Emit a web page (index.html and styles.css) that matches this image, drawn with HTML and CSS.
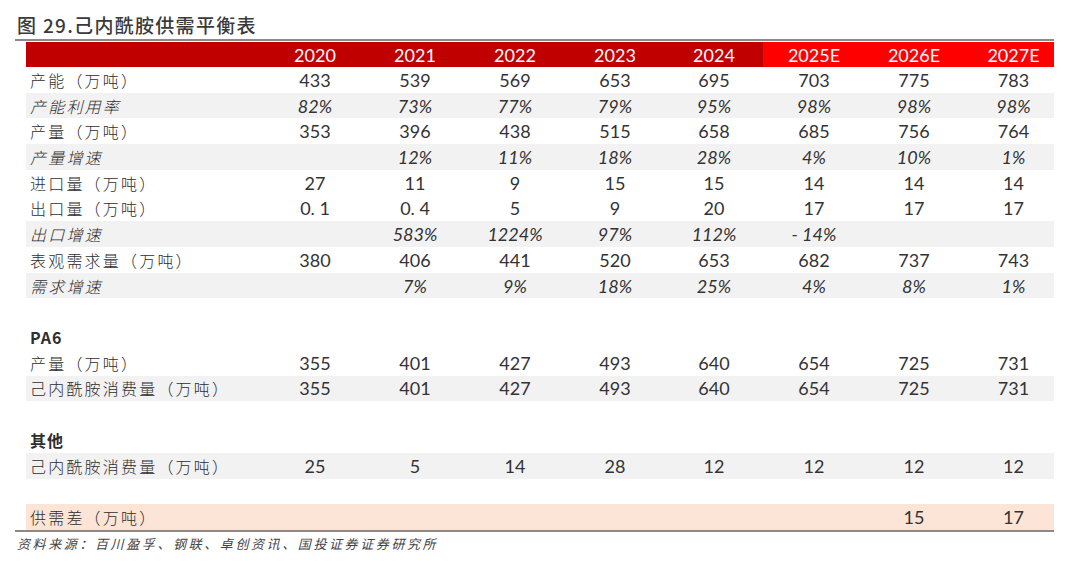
FILE: index.html
```html
<!DOCTYPE html>
<html lang="zh-CN">
<head>
<meta charset="utf-8">
<title>图 29.己内酰胺供需平衡表</title>
<link rel="stylesheet" href="styles.css">
</head>
<body>
<div class="page">
  <div class="title">图 29.己内酰胺供需平衡表</div>
  <div class="rule"></div>
  <div class="table">
    <div class="row head">
      <div class="lab dark"></div>
      <div class="num dark">2020</div>
      <div class="num dark">2021</div>
      <div class="num dark">2022</div>
      <div class="num dark">2023</div>
      <div class="num dark">2024</div>
      <div class="num bright">2025E</div>
      <div class="num bright">2026E</div>
      <div class="num bright last">2027E</div>
    </div>
    <div class="row">
      <div class="lab">产能（万吨）</div>
      <div class="num">433</div><div class="num">539</div><div class="num">569</div><div class="num">653</div><div class="num">695</div><div class="num">703</div><div class="num">775</div><div class="num last">783</div>
    </div>
    <div class="row grey it">
      <div class="lab">产能利用率</div>
      <div class="num">82%</div><div class="num">73%</div><div class="num">77%</div><div class="num">79%</div><div class="num">95%</div><div class="num">98%</div><div class="num">98%</div><div class="num last">98%</div>
    </div>
    <div class="row">
      <div class="lab">产量（万吨）</div>
      <div class="num">353</div><div class="num">396</div><div class="num">438</div><div class="num">515</div><div class="num">658</div><div class="num">685</div><div class="num">756</div><div class="num last">764</div>
    </div>
    <div class="row grey it">
      <div class="lab">产量增速</div>
      <div class="num"></div><div class="num">12%</div><div class="num">11%</div><div class="num">18%</div><div class="num">28%</div><div class="num">4%</div><div class="num">10%</div><div class="num last">1%</div>
    </div>
    <div class="row">
      <div class="lab">进口量（万吨）</div>
      <div class="num">27</div><div class="num">11</div><div class="num">9</div><div class="num">15</div><div class="num">15</div><div class="num">14</div><div class="num">14</div><div class="num last">14</div>
    </div>
    <div class="row">
      <div class="lab">出口量（万吨）</div>
      <div class="num">0. 1</div><div class="num">0. 4</div><div class="num">5</div><div class="num">9</div><div class="num">20</div><div class="num">17</div><div class="num">17</div><div class="num last">17</div>
    </div>
    <div class="row grey it">
      <div class="lab">出口增速</div>
      <div class="num"></div><div class="num">583%</div><div class="num">1224%</div><div class="num">97%</div><div class="num">112%</div><div class="num">- 14%</div><div class="num"></div><div class="num last"></div>
    </div>
    <div class="row">
      <div class="lab">表观需求量（万吨）</div>
      <div class="num">380</div><div class="num">406</div><div class="num">441</div><div class="num">520</div><div class="num">653</div><div class="num">682</div><div class="num">737</div><div class="num last">743</div>
    </div>
    <div class="row grey it">
      <div class="lab">需求增速</div>
      <div class="num"></div><div class="num">7%</div><div class="num">9%</div><div class="num">18%</div><div class="num">25%</div><div class="num">4%</div><div class="num">8%</div><div class="num last">1%</div>
    </div>
    <div class="row"></div>
    <div class="row group">
      <div class="lab">PA6</div>
    </div>
    <div class="row">
      <div class="lab">产量（万吨）</div>
      <div class="num">355</div><div class="num">401</div><div class="num">427</div><div class="num">493</div><div class="num">640</div><div class="num">654</div><div class="num">725</div><div class="num last">731</div>
    </div>
    <div class="row grey">
      <div class="lab">己内酰胺消费量（万吨）</div>
      <div class="num">355</div><div class="num">401</div><div class="num">427</div><div class="num">493</div><div class="num">640</div><div class="num">654</div><div class="num">725</div><div class="num last">731</div>
    </div>
    <div class="row"></div>
    <div class="row group">
      <div class="lab">其他</div>
    </div>
    <div class="row grey">
      <div class="lab">己内酰胺消费量（万吨）</div>
      <div class="num">25</div><div class="num">5</div><div class="num">14</div><div class="num">28</div><div class="num">12</div><div class="num">12</div><div class="num">12</div><div class="num last">12</div>
    </div>
    <div class="row"></div>
    <div class="row peach">
      <div class="lab">供需差（万吨）</div>
      <div class="num"></div><div class="num"></div><div class="num"></div><div class="num"></div><div class="num"></div><div class="num"></div><div class="num">15</div><div class="num last">17</div>
    </div>
  </div>
  <div class="rule bottom"></div>
  <div class="source">资料来源：百川盈孚、钢联、卓创资讯、国投证券证券研究所</div>
</div>
</body>
</html>
```

FILE: styles.css
```css
html, body {
  margin: 0;
  padding: 0;
  background: #ffffff;
}

.page {
  width: 1080px;
  height: 563px;
  padding: 0 0 0 15px;
  box-sizing: border-box;
  color: #333333;
  font-family: Lato, "Noto Sans CJK SC", sans-serif;
}

.title {
  height: 39px;
  line-height: 50px;
  padding-left: 2px;
  font-family: "Noto Sans CJK SC", sans-serif;
  font-size: 19px;
  font-weight: 500;
  letter-spacing: 1.3px;
  color: #3a3a3a;
}

.rule {
  width: 1039px;
  height: 2px;
  background: #8a8a8a;
}

.table {
  margin-left: 11px;
  width: 1028px;
  padding-top: 1px;
}

.row {
  display: grid;
  grid-template-columns: 239px 100px 100px 100px 100px 98px 102px 98px 91px;
  height: 25.72px;
  align-items: center;
}

.row.head {
  height: 25px;
  align-items: stretch;
}

.head .num {
  color: #ffffff;
  font-size: 18px;
  display: flex;
  align-items: center;
  justify-content: center;
}

.dark {
  background: #c00000;
}

.bright {
  background: #ff0000;
}

.grey {
  background: #f2f2f2;
}

.peach {
  background: #fce4d6;
}

.lab {
  padding-left: 4px;
  font-family: "Noto Sans CJK SC", sans-serif;
  font-size: 16px;
  font-weight: 300;
  letter-spacing: 2.2px;
  white-space: nowrap;
  color: #2e2e2e;
}

.num {
  text-align: center;
  font-size: 18px;
  white-space: nowrap;
  color: #333333;
}

.num.last {
  padding-left: 10px;
}

.it .lab,
.it .num {
  font-style: italic;
}

.group .lab {
  font-weight: 700;
  letter-spacing: 1px;
  font-size: 16px;
}

.source {
  padding-left: 2px;
  padding-top: 2px;
  font-family: "Noto Sans CJK SC", sans-serif;
  font-size: 13px;
  font-style: italic;
  letter-spacing: 2.6px;
  color: #444444;
}
```
